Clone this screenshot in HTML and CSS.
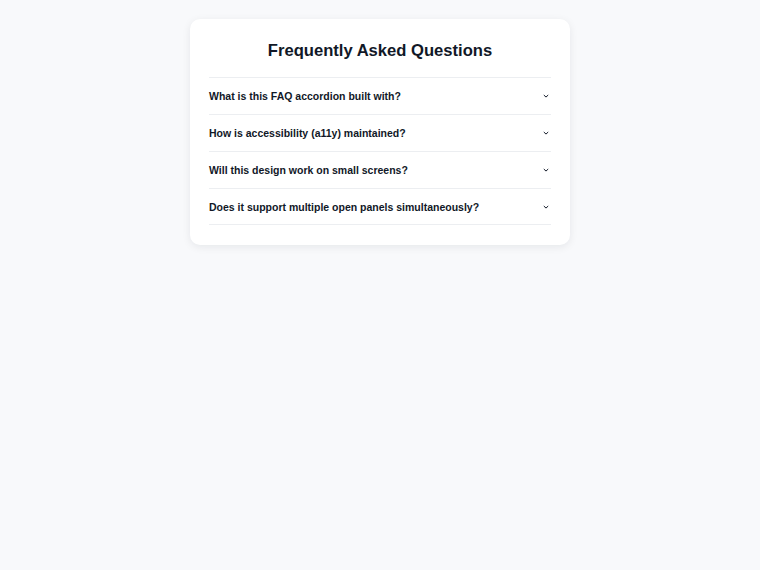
FILE: index.html
```html
<!DOCTYPE html>
<html lang="en">
<head>
    <meta charset="UTF-8">
    <meta name="viewport" content="width=device-width, initial-scale=1.0">
    <title>FAQ</title>
    <link rel="stylesheet" href="styles.css">
</head>
<body>
    <div class="faq">
        <h1>Frequently Asked Questions</h1>
        <div class="faq-item">
            <button class="faq-question">What is this FAQ accordion built with?
                <svg class="chevron" viewBox="0 0 8 8"><path d="M1.8 3 L4 5.1 L6.2 3"/></svg>
            </button>
        </div>
        <div class="faq-item">
            <button class="faq-question">How is accessibility (a11y) maintained?
                <svg class="chevron" viewBox="0 0 8 8"><path d="M1.8 3 L4 5.1 L6.2 3"/></svg>
            </button>
        </div>
        <div class="faq-item">
            <button class="faq-question">Will this design work on small screens?
                <svg class="chevron" viewBox="0 0 8 8"><path d="M1.8 3 L4 5.1 L6.2 3"/></svg>
            </button>
        </div>
        <div class="faq-item">
            <button class="faq-question">Does it support multiple open panels simultaneously?
                <svg class="chevron" viewBox="0 0 8 8"><path d="M1.8 3 L4 5.1 L6.2 3"/></svg>
            </button>
        </div>
    </div>
</body>
</html>
```

FILE: styles.css
```css
body {
    font-family: "Liberation Sans", Arial, sans-serif;
    background-color: #f8f9fb;
    color: #111827;
    margin: 0;
    padding: 19px 0;
}
.faq {
    background-color: #fff;
    width: 380px;
    margin: 0 auto;
    padding: 19px 19px 20px;
    box-sizing: border-box;
    border-radius: 10px;
    box-shadow: 0 2px 8px rgba(15, 23, 42, 0.08);
}
h1 {
    font-size: 16.6px;
    line-height: 26px;
    text-align: center;
    margin: 0 0 13px;
}
.faq-item {
    border-top: 1px solid #eceef1;
}
.faq-item:last-child {
    border-bottom: 1px solid #eceef1;
}
.faq-question {
    display: flex;
    justify-content: space-between;
    align-items: center;
    width: 100%;
    padding: 11px 0;
    background: none;
    border: none;
    font-family: inherit;
    font-size: 10.5px;
    line-height: 14px;
    font-weight: bold;
    color: #111827;
    text-align: left;
    cursor: pointer;
}
.faq-item:last-child .faq-question {
    padding-bottom: 10px;
}
.chevron {
    width: 8px;
    height: 8px;
    margin-right: 1px;
    fill: none;
    stroke: #111827;
    stroke-width: 1;
}
```
